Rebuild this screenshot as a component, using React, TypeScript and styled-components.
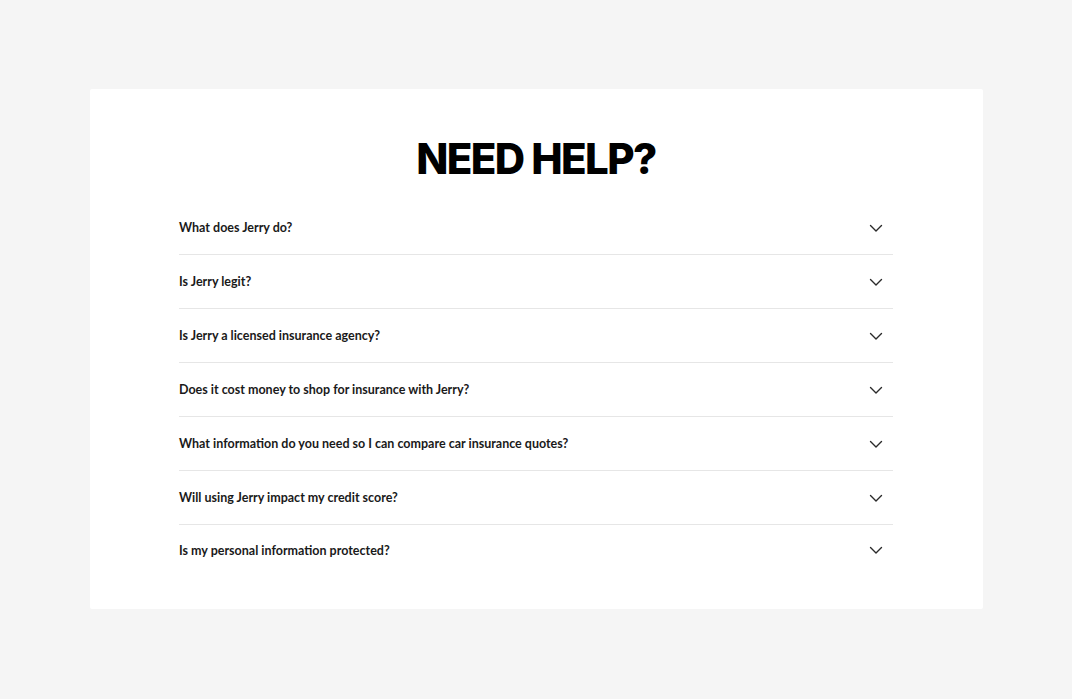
import React from 'react';
import styled, { createGlobalStyle } from 'styled-components';

const GlobalStyle = createGlobalStyle`
  html, body {
    margin: 0;
    padding: 0;
    background: #f5f5f5;
  }
  body {
    font-family: Lato, "Noto Sans", sans-serif;
    color: #111;
  }
`;

const Page = styled.div`
  width: 1072px;
  height: 699px;
  box-sizing: border-box;
  padding: 89px 89px 0 90px;
`;

const Card = styled.section`
  background: #fff;
  border-radius: 2px;
  height: 520px;
  box-sizing: border-box;
  padding: 0 90px 0 89px;
  display: flex;
  flex-direction: column;
`;

const Title = styled.h2`
  margin: 0;
  height: 112px;
  box-sizing: border-box;
  padding-top: 45px;
  text-align: center;
  font-family: Inter, "Noto Sans", sans-serif;
  font-size: 42px;
  line-height: 50px;
  font-weight: 800;
  letter-spacing: -1.6px;
  color: #000;
`;

const List = styled.ul`
  list-style: none;
  margin: 0;
  padding: 0;
`;

const Row = styled.li<{ $last?: boolean }>`
  height: 54px;
  box-sizing: border-box;
  display: flex;
  align-items: center;
  justify-content: space-between;
  border-bottom: ${p => (p.$last ? 'none' : '1px solid #e6e6e6')};
  padding-bottom: ${p => (p.$last ? '4px' : '0')};
`;

const Question = styled.span`
  font-size: 12.5px;
  font-weight: 700;
  color: #1a1a1a;
`;

const Chevron = styled.svg`
  width: 14px;
  height: 14px;
  margin-right: 10px;
  flex-shrink: 0;
`;

const questions = [
  'What does Jerry do?',
  'Is Jerry legit?',
  'Is Jerry a licensed insurance agency?',
  'Does it cost money to shop for insurance with Jerry?',
  'What information do you need so I can compare car insurance quotes?',
  'Will using Jerry impact my credit score?',
  'Is my personal information protected?',
];

const App: React.FC = () => (
  <>
    <GlobalStyle />
    <Page>
      <Card>
        <Title>NEED HELP?</Title>
        <List>
          {questions.map((q, i) => (
            <Row key={q} $last={i === questions.length - 1}>
              <Question>{q}</Question>
              <Chevron viewBox="0 0 14 14" fill="none">
                <path d="M1.5 4.5L7 10L12.5 4.5" stroke="#2a2a2a" strokeWidth="1.4" strokeLinecap="round" strokeLinejoin="round" />
              </Chevron>
            </Row>
          ))}
        </List>
      </Card>
    </Page>
  </>
);

export default App;
